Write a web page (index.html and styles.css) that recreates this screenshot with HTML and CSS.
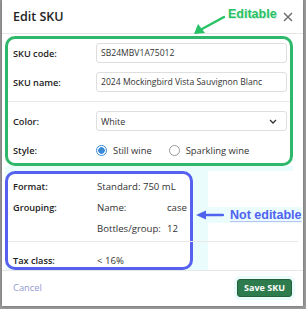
FILE: index.html
```html
<!DOCTYPE html>
<html lang="en">
<head>
    <meta charset="UTF-8">
    <title>Edit SKU</title>
    <link rel="stylesheet" href="styles.css">
</head>
<body>
<div class="modal">
    <header class="modal-head">
        <h1>Edit SKU</h1>
        <svg class="close" width="10" height="10" viewBox="0 0 10 10">
            <path d="M1 1 L9 9 M9 1 L1 9" stroke="#6b6b6b" stroke-width="1.4" fill="none"/>
        </svg>
    </header>

    <div class="modal-body">
        <section class="editable">
            <div class="field">
                <label>SKU code:</label>
                <input type="text" value="SB24MBV1A75012">
            </div>
            <div class="field">
                <label>SKU name:</label>
                <input type="text" value="2024 Mockingbird Vista Sauvignon Blanc">
            </div>
            <div class="rule"></div>
            <div class="field">
                <label>Color:</label>
                <div class="select">
                    <span>White</span>
                    <svg width="8" height="5" viewBox="0 0 8 5">
                        <path d="M1 1 L4 4 L7 1" stroke="#333" stroke-width="1.3" fill="none"/>
                    </svg>
                </div>
            </div>
            <div class="field field-radio">
                <label>Style:</label>
                <div class="radios">
                    <span class="radio checked"><i></i>Still wine</span>
                    <span class="radio"><i></i>Sparkling wine</span>
                </div>
            </div>
        </section>

        <div class="readonly-zone">
            <section class="readonly">
                <div class="info">
                    <span class="info-label">Format:</span>
                    <span>Standard: 750 mL</span>
                </div>
                <div class="info">
                    <span class="info-label">Grouping:</span>
                    <div class="group">
                        <span>Name:</span><span>case</span>
                        <span>Bottles/group:</span><span>12</span>
                    </div>
                </div>
                <div class="rule rule-wide"></div>
                <div class="info info-tax">
                    <span class="info-label">Tax class:</span>
                    <span>&lt; 16%</span>
                </div>
            </section>
        </div>
    </div>

    <footer class="modal-foot">
        <a class="cancel">Cancel</a>
        <button class="save">Save SKU</button>
    </footer>

    <div class="note note-edit">
        <svg class="arrow" width="34" height="22" viewBox="0 0 34 22">
            <path d="M32 3 L10 15" stroke="#27c265" stroke-width="2.4" fill="none" stroke-linecap="round"/>
            <path d="M2 20 L6 10 L13 19 Z" fill="#27c265"/>
        </svg>
        <span>Editable</span>
    </div>

    <div class="note note-fixed">
        <svg class="arrow" width="28" height="10" viewBox="0 0 28 10">
            <path d="M27 5 L9 5" stroke="#4f63ef" stroke-width="2.4" fill="none" stroke-linecap="round"/>
            <path d="M0 5 L10 0.5 L10 9.5 Z" fill="#4f63ef"/>
        </svg>
        <span>Not editable</span>
    </div>
</div>
</body>
</html>
```

FILE: styles.css
```css
body {
    margin: 0;
    background-color: #9b9b9b;
    font-family: 'Open Sans', 'Noto Sans', sans-serif;
    color: #222;
}

.modal {
    position: relative;
    margin: 0 3px 3px 2px;
    height: 306px;
    background-color: #ffffff;
    box-shadow: 0 0 3px rgba(0, 0, 0, 0.35);
    display: flex;
    flex-direction: column;
}

.modal-head {
    height: 33px;
    border-bottom: 1px solid #e6e6e6;
    display: flex;
    align-items: center;
    justify-content: space-between;
    padding: 0 10px 0 11px;
}
.modal-head h1 {
    margin: 0;
    font-size: 12.5px;
    font-weight: 600;
    color: #222;
}
.close {
    margin-top: 1px;
}

.modal-body {
    padding: 2px 10px 0 3px;
}

/* editable fields */
.editable {
    height: 130px;
    box-sizing: border-box;
    border: 3px solid #2fb86b;
    border-radius: 10px;
    padding: 4px 3px 0 5px;
}
.field {
    display: grid;
    grid-template-columns: 83px 1fr;
    align-items: center;
    height: 20px;
    margin-bottom: 9px;
}
.field label {
    font-size: 9.2px;
    font-weight: 600;
}
.field input, .select {
    height: 20px;
    box-sizing: border-box;
    border: 1px solid #dedede;
    border-radius: 3px;
    padding: 0 4px;
    font-family: 'Open Sans', 'Noto Sans', sans-serif;
    font-size: 8.6px;
    color: #333;
    width: 100%;
}
.select {
    display: flex;
    align-items: center;
    justify-content: space-between;
    padding: 0 9px 0 4px;
    font-size: 9px;
}
.rule {
    height: 1px;
    background-color: #e8e8e8;
    margin: 1px -3px 9px -5px;
}
.radios {
    display: flex;
    gap: 17px;
    font-size: 9.4px;
    color: #333;
}
.radio {
    display: flex;
    align-items: center;
    gap: 6px;
}
.radio i {
    width: 11px;
    height: 11px;
    border: 1px solid #9a9a9a;
    border-radius: 50%;
    box-sizing: border-box;
}
.radio.checked i {
    border: 1px solid #3b8ad8;
    background: radial-gradient(circle, #3b8ad8 0 3px, #ffffff 3.5px);
}

/* read only block */
.readonly-zone {
    padding-top: 5px;
    background:
        linear-gradient(#eafcfc 0 5px, transparent 5px),
        linear-gradient(to right, #eafcfc 203px, transparent 203px);
    height: 104px;
    box-sizing: border-box;
}
.readonly {
    width: 188px;
    height: 99px;
    box-sizing: border-box;
    border: 3px solid #5662ef;
    border-radius: 10px;
    padding: 2px 0 0 5px;
    background-color: #ffffff;
    font-size: 9.6px;
}
.info {
    display: grid;
    grid-template-columns: 84px 1fr;
    align-items: start;
    line-height: 21px;
    color: #333;
}
.info-label {
    font-size: 9.2px;
    font-weight: 600;
    color: #222;
}
.group {
    display: grid;
    grid-template-columns: 70px 1fr;
}
.rule-wide {
    margin: 2px -108px 0 -5px;
}
.info-tax {
    line-height: 14px;
    padding-top: 12px;
}

.modal-foot {
    flex: 1;
    border-top: 1px solid #e6e6e6;
    display: flex;
    align-items: center;
    justify-content: space-between;
    padding: 0 11px 2px 11px;
}
.cancel {
    font-size: 9.4px;
    color: #949bd0;
}
.save {
    height: 18px;
    padding: 0 6px;
    background-color: #2e7c4e;
    color: #ffffff;
    border: 1px solid #24603c;
    border-radius: 3px;
    font-family: 'Open Sans', 'Noto Sans', sans-serif;
    font-size: 9px;
    font-weight: 700;
    box-shadow: 0 0 0 3px #e9fbfa;
}

/* annotation notes drawn over the dialog */
.note {
    position: absolute;
    font-family: 'Liberation Sans', Arial, sans-serif;
    font-weight: 700;
    font-size: 12.5px;
}
.note-edit {
    left: 190px;
    top: 7px;
    color: #27c265;
}
.note-edit .arrow {
    position: absolute;
    left: 0;
    top: 7px;
}
.note-edit span {
    position: absolute;
    left: 36px;
    top: 0;
    text-shadow: 1px 1px 0 #d6eedd;
}
.note-fixed {
    left: 194px;
    top: 207px;
    width: 106px;
    height: 16px;
    background-color: #eafcfc;
    color: #4f63ef;
    display: flex;
    align-items: center;
    gap: 6px;
}
.note-fixed span {
    text-decoration: underline;
    text-decoration-color: #b9c2f6;
    text-underline-offset: 2px;
}
```
